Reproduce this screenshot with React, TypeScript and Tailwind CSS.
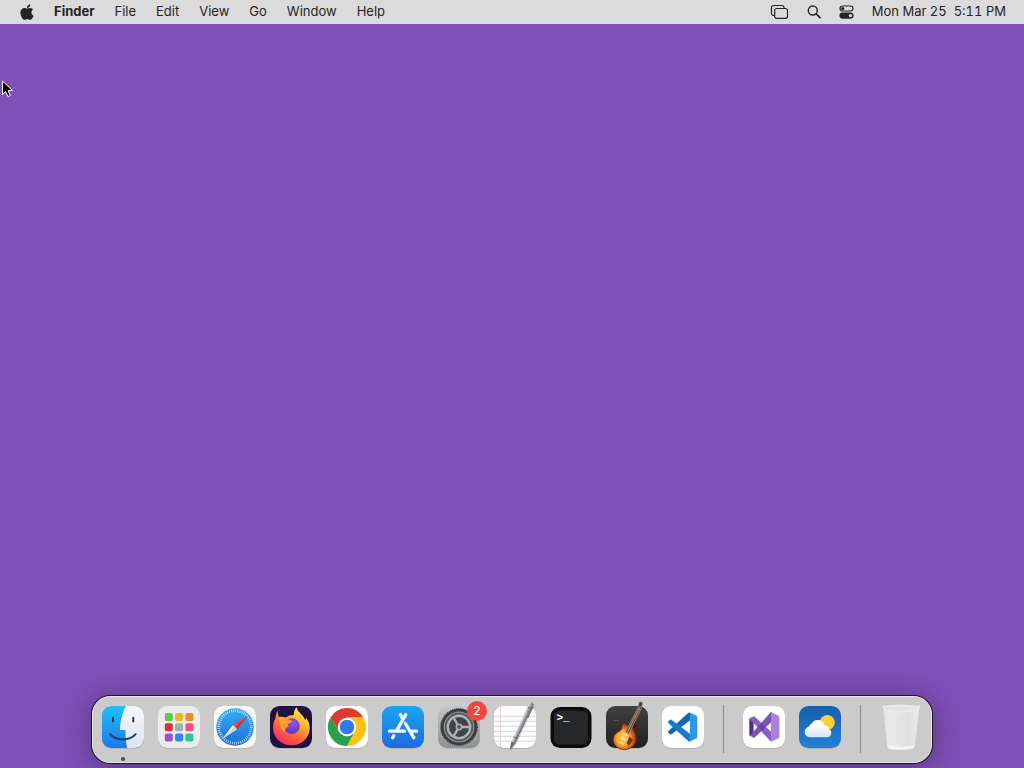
import React from 'react';
import { FaApple } from 'react-icons/fa';

interface DockApp {
  id: string;
  label: string;
  icon: React.ReactNode;
  running?: boolean;
  badge?: number;
}

const menus = ['File', 'Edit', 'View', 'Go', 'Window', 'Help'];

function Tile({ fill }: { fill: string }) {
  return (
    <>
      <rect x="7" y="7.8" width="42" height="42" rx="9.5" fill="#000" opacity="0.16" />
      <rect x="7" y="7" width="42" height="42" rx="9.5" fill={fill} />
    </>
  );
}

function Icon({ children }: { children: React.ReactNode }) {
  return (
    <svg viewBox="0 0 56 56" className="block size-14 overflow-visible" aria-hidden="true">
      {children}
    </svg>
  );
}

function FinderIcon() {
  return (
    <Icon>
      <defs>
        <linearGradient id="finder-blue" x1="0" y1="0" x2="0" y2="1">
          <stop offset="0" stopColor="#22c0f8" />
          <stop offset="1" stopColor="#1b78ee" />
        </linearGradient>
        <linearGradient id="finder-white" x1="0" y1="0" x2="0" y2="1">
          <stop offset="0" stopColor="#f4f5f8" />
          <stop offset="1" stopColor="#dde6f2" />
        </linearGradient>
        <clipPath id="finder-clip">
          <rect x="7" y="7" width="42" height="42" rx="9.5" />
        </clipPath>
      </defs>
      <Tile fill="url(#finder-blue)" />
      <path
        clipPath="url(#finder-clip)"
        d="M31 7C27.5 13 25.2 21.5 25 31h5.6c-.2 6 .2 12 1.5 18H50V7z"
        fill="url(#finder-white)"
      />
      <path d="M18 18.8v3.7M38.3 18.8v3.7" stroke="#16344e" strokeWidth="1.9" strokeLinecap="round" />
      <path d="M15.3 35.2c6.5 7 19 7 25.4 0" fill="none" stroke="#1a3f66" strokeWidth="2" strokeLinecap="round" />
    </Icon>
  );
}

const launchpadColors = [
  '#5dcb4b', '#f6b51c', '#f08a24',
  '#df2f36', '#9fb0b0', '#f04f80',
  '#a04fd2', '#2b8eea', '#2fc2a2',
];

function LaunchpadIcon() {
  return (
    <Icon>
      <Tile fill="#ececec" />
      {launchpadColors.map((color, i) => (
        <rect
          key={color}
          x={13.8 + (i % 3) * 10.3}
          y={14 + Math.floor(i / 3) * 10.2}
          width="8"
          height="8"
          rx="1.9"
          fill={color}
        />
      ))}
    </Icon>
  );
}

function SafariIcon() {
  return (
    <Icon>
      <defs>
        <linearGradient id="safari-dial" x1="0" y1="0" x2="0" y2="1">
          <stop offset="0" stopColor="#35aef0" />
          <stop offset="1" stopColor="#1d6fdc" />
        </linearGradient>
      </defs>
      <Tile fill="#f8f8f8" />
      <circle cx="28" cy="28" r="18.7" fill="url(#safari-dial)" />
      <circle cx="28" cy="28" r="16.2" fill="none" stroke="#fff" strokeWidth="2.6" strokeDasharray=".8 1.320" opacity=".8" />
      <path d="M41.5 16.5 30 30.2 25.9 25.9z" fill="#f0483c" />
      <path d="M41.5 16.5 30 30.2 28 28z" fill="#c9352f" />
      <path d="M15.5 39.8 25.9 25.9 30 30.2z" fill="#f4f6f8" />
      <path d="M15.5 39.8 28 28l2 2.2z" fill="#c5d0da" />
    </Icon>
  );
}

function FirefoxIcon() {
  return (
    <Icon>
      <defs>
        <linearGradient id="fox-body" x1=".85" y1="0" x2=".2" y2="1">
          <stop offset=".1" stopColor="#ffe63e" />
          <stop offset=".35" stopColor="#ffb52d" />
          <stop offset=".62" stopColor="#ff6a35" />
          <stop offset="1" stopColor="#f0246c" />
        </linearGradient>
        <linearGradient id="fox-head" x1="0" y1="0" x2="1" y2="1">
          <stop offset="0" stopColor="#ffb22b" />
          <stop offset="1" stopColor="#ff7b35" />
        </linearGradient>
        <radialGradient id="fox-globe" cx=".6" cy=".3">
          <stop offset="0" stopColor="#9a50ec" />
          <stop offset="1" stopColor="#6142c8" />
        </radialGradient>
      </defs>
      <Tile fill="#20113f" />
      <path
        d="M14.7 11.5c-.2 3 .3 5 1.4 6.600 2.400-.8 4.700-.5 6.600.3 2.500-1.700 5-2.500 8-2.500 0-3 .9-5.800 3-7.700.5 3.600 3 5.300 5.300 7.700 1.600 1.600 2.600 3.400 3 5.200.8-.6 1-1.500.9-2.600 2.800 3.400 4 7.300 3.800 11.300-.5 9.200-8 16.500-18.200 16.500-10.500 0-18.400-7.500-18.400-17.500 0-3.800.8-7.200 2.400-9.900.2-2.800 1-5.400 2.200-7.400z"
        fill="url(#fox-body)"
      />
      <circle cx="28.8" cy="27.2" r="7.9" fill="url(#fox-globe)" />
      <path
        d="M15.800 18.500c3-1.300 6.300-.4 8.500 2 2.500-.1 4.600.6 4.900 1.600-.2 1.500-2.700 1.900-4 3-.5 1.100 0 2 1.300 2.500-3.500.6-5 3.200-4.400 6-3.800-2.600-5.500-6-5.200-9.600-1.100-1.700-1.500-3.500-1.100-5.500z"
        fill="url(#fox-head)"
      />
    </Icon>
  );
}

function ChromeIcon() {
  return (
    <Icon>
      <Tile fill="#fdfdfd" />
      <path d="M28 18.500h16.500A19 19 0 0 0 11.5 18.500L20.200 32.500z" fill="#dd3a31" />
      <path d="M11.5 18.500A19 19 0 0 0 28.300 47l7.500-14.500H20.200z" fill="#29a04a" />
      <path d="M44.500 18.500A19 19 0 0 1 28 47l7.800-14.500L28 18.500z" fill="#fbc116" />
      <circle cx="28" cy="28" r="9.200" fill="#fff" />
      <circle cx="28" cy="28" r="7.300" fill="#3079ea" />
    </Icon>
  );
}

function AppStoreIcon() {
  return (
    <Icon>
      <defs>
        <linearGradient id="store-bg" x1="0" y1="0" x2="0" y2="1">
          <stop offset="0" stopColor="#1ba5f2" />
          <stop offset="1" stopColor="#1e6bde" />
        </linearGradient>
      </defs>
      <Tile fill="url(#store-bg)" />
      <g stroke="#f3f9ff" strokeWidth="3.3" strokeLinecap="round" fill="none">
        <path d="m30.8 15.600-9.500 16.500M18.700 36.800l-1.100 1.900M25.400 15.600l2.600 4.500M30.400 24.500l8.400 14.200M14.500 32.200h15M36.500 32.200h5" />
      </g>
    </Icon>
  );
}

function SettingsIcon() {
  return (
    <Icon>
      <defs>
        <linearGradient id="settings-bg" x1="0" y1="0" x2="0" y2="1">
          <stop offset="0" stopColor="#c4c8c8" />
          <stop offset="1" stopColor="#8f9191" />
        </linearGradient>
      </defs>
      <Tile fill="url(#settings-bg)" />
      <circle cx="28" cy="28" r="18.2" fill="#3a3c3e" />
      <circle cx="28" cy="28" r="18.3" fill="none" stroke="#3a3c3e" strokeWidth="1.2" strokeDasharray="1 .92" />
      <circle cx="28" cy="28" r="14.8" fill="#55595b" stroke="#8b8f90" strokeWidth="1.3" />
      <circle cx="28" cy="28" r="11.200" fill="#414446" stroke="#aeb2b2" strokeWidth="2.4" />
      <path d="M28 28h11M28 28l-5.5-9.500M28 28l-5.500 9.500" stroke="#aeb2b2" strokeWidth="2.4" />
      <circle cx="28" cy="28" r="2.700" fill="#55595b" stroke="#aeb2b2" strokeWidth="1.5" />
    </Icon>
  );
}

function TextEditIcon() {
  return (
    <Icon>
      <defs>
        <linearGradient id="pen" x1="0" y1="0" x2="1" y2="0">
          <stop offset="0" stopColor="#d9dcdf" />
          <stop offset=".45" stopColor="#a7abb0" />
          <stop offset="1" stopColor="#5c6066" />
        </linearGradient>
      </defs>
      <Tile fill="#fcfcfc" />
      <path d="M7 17.3h42M7 22.3h42M7 27.3h42M7 32.3h42M7 37.3h42M7 42.3h42" stroke="#cdd1d6" strokeWidth=".8" />
      <path d="M13.5 7v42" stroke="#dcc3c1" strokeWidth=".7" />
      <g transform="rotate(25 34 27)">
        <path d="M32 3.5q2-2.5 4 0V45l-2 8.500L32 45z" fill="#000" opacity=".15" transform="translate(1.5 .5)" />
        <path d="M31.800 2q2.200-2.500 4.400 0v43h-4.400z" fill="url(#pen)" />
        <path d="M31.800 45h4.400l-1.700 7.500h-1z" fill="#696d72" />
        <path d="M36 4h1.200v13H36z" fill="#6f7479" />
        <path d="M31.800 7h4.400M31.800 40h4.400" stroke="#62666b" strokeWidth=".8" />
      </g>
    </Icon>
  );
}

function TerminalIcon() {
  return (
    <Icon>
      <rect x="7.500" y="8" width="41" height="41" rx="9.500" fill="#0c0c0c" />
      <rect x="11" y="11.500" width="34" height="34" rx="5.500" fill="#262728" />
      <text x="13.500" y="21.500" className="font-['Liberation_Mono',monospace] text-[11px] font-bold" fill="#fff">
        &gt;_
      </text>
    </Icon>
  );
}

function GarageBandIcon() {
  return (
    <Icon>
      <defs>
        <linearGradient id="amp" x1="0" y1="0" x2="0" y2="1">
          <stop offset="0" stopColor="#414141" />
          <stop offset="1" stopColor="#202020" />
        </linearGradient>
        <radialGradient id="guitar" cx=".42" cy=".58" r=".6">
          <stop offset="0" stopColor="#ffd65a" />
          <stop offset=".45" stopColor="#f8a52e" />
          <stop offset=".75" stopColor="#c4531a" />
          <stop offset="1" stopColor="#4d1808" />
        </radialGradient>
      </defs>
      <Tile fill="url(#amp)" />
      <path d="M14 21.500h6" stroke="#5a5a5a" strokeWidth=".8" />
      <path
        d="M23.500 24.500c1.300-1.800 3.500-.8 4.400 1.300 1 .7 2.600.8 4 .2 1.800-1.200 3.800-1.900 4.900-.6 1.500 1.900-1.200 3.800-1.600 6.100.3 2.500 3.200 4.200 2.900 8.500-.6 6.400-7 11-13.200 10.700-6.700-.4-11.500-5.600-10.700-11.300.7-4.900 4.700-5.900 7.600-8.400 1.900-1.900.4-4.400 1.700-6.500z"
        fill="url(#guitar)"
        stroke="#4a1b0b"
        strokeWidth=".6"
      />
      <path d="m26.300 33 12.700-24 2.800 1.500L29.800 35z" fill="#6e4a38" stroke="#b79a80" strokeWidth=".6" />
      <path d="m38.800 9.500 1.400-6.500q2-.8 3.600 1l-2 7z" fill="#4b3c35" stroke="#a79a8c" strokeWidth=".6" />
      <path d="m30.500 37.500 3.400 3.500-3.900 5.500-2.500-2z" fill="#3a150b" opacity=".75" />
      <path d="m24 34.500 4.600 2.400M21.800 38.700l4.600 2.400M19.700 42.900l5 2.600" stroke="#f7e6bf" strokeWidth="1.200" />
      <path d="M24 42 41.500 7" stroke="#e4cfae" strokeWidth=".6" />
    </Icon>
  );
}

function VSCodeIcon() {
  return (
    <Icon>
      <Tile fill="#fff" />
      <g transform="translate(13 13.4) scale(1.22)">
        <path d="M16.500.5.326 15.260a1 1 0 0 0 0 1.479L1.650 17.940a1 1 0 0 0 1.276.057L18.004 6.552V0z" fill="#1668ad" />
        <path d="M16.500 23.500.326 8.740a1 1 0 0 1 0-1.479L1.650 6.060a1 1 0 0 1 1.276-.057L18.004 17.448V24z" fill="#167bca" />
        <path d="M18.210.21 23.150 2.587A1.500 1.500 0 0 1 24 3.939V20.060a1.500 1.500 0 0 1-.848 1.352L18.210 23.790a1.490 1.490 0 0 1-1.704-.29c.55.500 1.498.130 1.498-.690V1.190c0-.820-.948-1.190-1.498-.690a1.494 1.494 0 0 1 1.704-.290z" fill="#2b98ec" />
      </g>
    </Icon>
  );
}

function VisualStudioIcon() {
  return (
    <Icon>
      <Tile fill="#fff" />
      <path d="M13.300 19.800 17.600 17.600v21l-4.300-2.400z" fill="#52318c" />
      <path d="M14 36.500 34.600 13.300 36 13v9.500L18.600 38.500q-.6.500-1.300.1z" fill="#7d51b5" />
      <path d="M13.300 19.800 17.300 17.500q.7-.3 1.300.1L36 33.500V42.700l-1.400-.4z" fill="#8c5fc6" />
      <path d="m22 28 3.500-4 4 4.200-3.700 3.800z" fill="#6a41a0" />
      <path
        d="m35 13.200 7.200 3.200q1.200.5 1.200 1.800v19.600q0 1.300-1.200 1.800L35 42.800z"
        fill="#ad80e0"
      />
    </Icon>
  );
}

function WeatherIcon() {
  return (
    <Icon>
      <defs>
        <linearGradient id="sky" x1="0" y1="0" x2="0" y2="1">
          <stop offset="0" stopColor="#155fad" />
          <stop offset="1" stopColor="#2380d4" />
        </linearGradient>
        <linearGradient id="cloud" x1="0" y1="0" x2="0" y2="1">
          <stop offset=".3" stopColor="#fff" />
          <stop offset="1" stopColor="#cfe4fa" />
        </linearGradient>
      </defs>
      <Tile fill="url(#sky)" />
      <circle cx="35.3" cy="23.5" r="7.5" fill="#fbcf35" />
      <path
        d="M18.300 38.300a5.400 5.400 0 0 1-1.200-10.700 3.800 3.800 0 0 1 2.700-3.200 6.900 6.900 0 0 1 12.700 2c3.300-.1 4.600 1.700 4.400 3.900 4 1.400 2.800 8-1.400 8z"
        fill="url(#cloud)"
      />
    </Icon>
  );
}

function TrashIcon() {
  return (
    <Icon>
      <defs>
        <linearGradient id="bin" x1="0" y1="0" x2="1" y2="0">
          <stop offset="0" stopColor="#dedede" />
          <stop offset=".15" stopColor="#ebebeb" />
          <stop offset=".7" stopColor="#dedede" />
          <stop offset="1" stopColor="#ececec" />
        </linearGradient>
      </defs>
      <path d="M10 8 14.200 47.500q.3 2.500 3 2.900 11 1.200 21.500 0 2.700-.4 3-2.900L46.300 8z" fill="url(#bin)" />
      <path d="M14.500 46q.3 4.600 13.500 4.600t13.500-4.600q-13.500 3.600-27 0z" fill="#fafafa" opacity=".7" />
      <path d="M9.500 7.500q18.700-3 37.400 0-1.500 3.300-5 4.300-13.700 2.500-27.400 0-3.700-1-5-4.300z" fill="#e3e3e3" stroke="#f2f2f2" strokeWidth=".8" />
    </Icon>
  );
}

const apps: DockApp[] = [
  { id: 'finder', label: 'Finder', icon: <FinderIcon />, running: true },
  { id: 'launchpad', label: 'Launchpad', icon: <LaunchpadIcon /> },
  { id: 'safari', label: 'Safari', icon: <SafariIcon /> },
  { id: 'firefox', label: 'Firefox', icon: <FirefoxIcon /> },
  { id: 'chrome', label: 'Google Chrome', icon: <ChromeIcon /> },
  { id: 'app-store', label: 'App Store', icon: <AppStoreIcon /> },
  { id: 'settings', label: 'System Settings', icon: <SettingsIcon />, badge: 2 },
  { id: 'textedit', label: 'TextEdit', icon: <TextEditIcon /> },
  { id: 'terminal', label: 'Terminal', icon: <TerminalIcon /> },
  { id: 'garageband', label: 'GarageBand', icon: <GarageBandIcon /> },
  { id: 'vscode', label: 'Visual Studio Code', icon: <VSCodeIcon /> },
];

const recents: DockApp[] = [
  { id: 'visual-studio', label: 'Visual Studio', icon: <VisualStudioIcon /> },
  { id: 'weather', label: 'Weather', icon: <WeatherIcon /> },
];

const trash: DockApp = { id: 'trash', label: 'Trash', icon: <TrashIcon /> };

function DockItem({ app }: { app: DockApp }) {
  return (
    <button type="button" aria-label={app.label} className="relative flex w-14 flex-col items-center">
      {app.icon}
      {app.badge && (
        <span className="absolute top-0.5 right-0 flex size-5 items-center justify-center rounded-full bg-[#f4463d] text-xs text-white">
          {app.badge}
        </span>
      )}
      {app.running && <span className="mt-0.5 size-1 rounded-full bg-[#4a4a4a]" />}
    </button>
  );
}

function DockDivider() {
  return (
    <div className="flex w-[25px] justify-center">
      <div className="mt-1.5 h-12 w-px bg-[#8d8d8d]" />
    </div>
  );
}

function MenuBar() {
  return (
    <header className="flex h-6 items-center justify-between bg-[#dcdbdc] pr-[18px] pl-2.5 text-[13px] text-[#242424]">
      <nav className="flex items-center">
        <button type="button" aria-label="Apple menu" className="px-2">
          <FaApple className="size-[18px]" />
        </button>
        <button type="button" className="px-2.5 font-bold">Finder</button>
        {menus.map((menu) => (
          <button key={menu} type="button" className="px-2.5">
            {menu}
          </button>
        ))}
      </nav>
      <div className="flex items-center gap-[18px]">
        <button type="button" aria-label="Screen mirroring">
          <svg viewBox="0 0 19 16" className="block h-4 w-[19px]" fill="none" stroke="currentColor" strokeWidth="1.2">
            <path d="M4.500 11.500H3.500A2 2 0 0 1 1.500 9.500V3.500a2 2 0 0 1 2-2h8.500a2 2 0 0 1 2 2v.8" />
            <rect x="4.700" y="4.500" width="12.800" height="9.800" rx="2" />
          </svg>
        </button>
        <button type="button" aria-label="Spotlight">
          <svg viewBox="0 0 14 16" className="block h-4 w-3.5" fill="none" stroke="currentColor" strokeLinecap="round">
            <circle cx="5.800" cy="6.500" r="4.500" strokeWidth="1.400" />
            <path d="m9.300 10 3.700 3.700" strokeWidth="1.700" />
          </svg>
        </button>
        <button type="button" aria-label="Control Center">
          <svg viewBox="0 0 15 16" className="block h-4 w-[15px]">
            <rect x="1" y="2" width="13" height="5" rx="2.500" fill="none" stroke="currentColor" strokeWidth="1.2" />
            <circle cx="3.700" cy="4.500" r="1.600" fill="currentColor" />
            <rect x=".4" y="8.500" width="14.200" height="6.200" rx="3.100" fill="currentColor" />
            <circle cx="11.500" cy="11.600" r="1.700" fill="#dcdbdc" />
          </svg>
        </button>
        <button type="button" className="whitespace-pre tabular-nums">Mon Mar 25  5:11 PM</button>
      </div>
    </header>
  );
}

export default function App() {
  return (
    <div className="relative flex min-h-screen flex-col overflow-hidden bg-[#7f50b8] font-['Inter','Liberation_Sans',sans-serif]">
      <MenuBar />
      <main className="flex-1" aria-label="Desktop" />
      <footer className="flex justify-center pb-[5px]">
        <div className="flex h-[67px] items-start rounded-[18px] border border-[#e9e9e9] bg-[#cbcbcb] px-0.5 pt-0.5 shadow-[0_0_0_1px_#23152f,0_4px_32px_rgba(0,0,0,0.36)]">
          {apps.map((app) => (
            <DockItem key={app.id} app={app} />
          ))}
          <DockDivider />
          {recents.map((app) => (
            <DockItem key={app.id} app={app} />
          ))}
          <DockDivider />
          <DockItem app={trash} />
        </div>
      </footer>

      {/* pointer */}
      <svg viewBox="0 0 12 18" className="pointer-events-none absolute top-20 left-0.5 h-[18px] w-3" aria-hidden="true">
        <path d="M.5 1v13.500l3.200-3 2.200 5 2.400-1-2.200-4.900h4.400z" fill="#000" stroke="#fff" strokeWidth="1" strokeLinejoin="round" />
      </svg>
    </div>
  );
}
